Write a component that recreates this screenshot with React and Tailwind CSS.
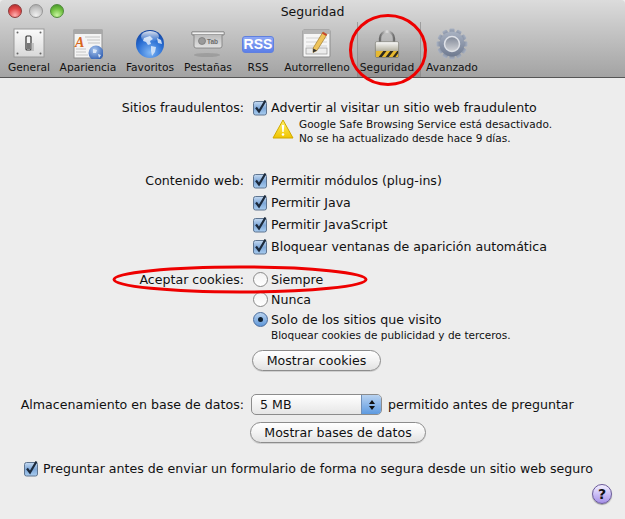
const font = { fontFamily: '"DejaVu Sans", sans-serif' };

function SwitchIcon() {
  return (
    <svg width="32" height="32" viewBox="0 0 32 32">
      <defs>
        <linearGradient id="plate" x1="0" y1="0" x2="0" y2="1">
          <stop offset="0" stopColor="#fbfbfb" />
          <stop offset="1" stopColor="#d8d8d8" />
        </linearGradient>
      </defs>
      <rect x="1" y="1" width="30" height="28" fill="url(#plate)" stroke="#9a9a9a" />
      <circle cx="4.5" cy="4.5" r="1" fill="#666" />
      <circle cx="27.5" cy="4.5" r="1" fill="#666" />
      <circle cx="4.5" cy="25.5" r="1" fill="#666" />
      <circle cx="27.5" cy="25.5" r="1" fill="#666" />
      <rect x="13" y="8" width="5" height="14" rx="1" fill="#f2f2f2" stroke="#333" strokeWidth="1.2" />
      <rect x="14" y="15" width="3" height="6" fill="#777" />
      <rect x="18" y="15" width="3" height="8" fill="#aaa" opacity="0.6" />
    </svg>
  );
}

function AppearanceIcon() {
  return (
    <svg width="30" height="30" viewBox="0 0 30 30">
      <defs>
        <radialGradient id="miniGlobe" cx="0.4" cy="0.3" r="0.8">
          <stop offset="0" stopColor="#a9c7f0" />
          <stop offset="1" stopColor="#1f4fa8" />
        </radialGradient>
      </defs>
      <rect x="1" y="1" width="28" height="28" fill="#f4f4f4" stroke="#8f8f8f" />
      <rect x="1" y="1" width="28" height="4" fill="#a8a8a8" />
      <path d="M12 8h15M14 11h13M15 14h12M3 20h10M3 23h10M3 26h12" stroke="#c4c4c4" strokeWidth="1" />
      <text x="2" y="18" fontSize="14" fontStyle="italic" fontWeight="700" fill="#d9671c" fontFamily="Liberation Serif, serif">A</text>
      <circle cx="23" cy="24" r="7.5" fill="url(#miniGlobe)" />
      <path d="M20 20l4 1-1 3-3 0zM25 25l3 1-2 3z" fill="#dbe7f7" />
    </svg>
  );
}

function GlobeIcon() {
  return (
    <svg width="30" height="30" viewBox="0 0 30 30">
      <defs>
        <radialGradient id="globe" cx="0.5" cy="0.8" r="0.85">
          <stop offset="0" stopColor="#7fb6f5" />
          <stop offset="0.55" stopColor="#2a6fd4" />
          <stop offset="1" stopColor="#0c3a94" />
        </radialGradient>
        <linearGradient id="shine" x1="0" y1="0" x2="0" y2="1">
          <stop offset="0" stopColor="#ffffff" stopOpacity="0.85" />
          <stop offset="1" stopColor="#ffffff" stopOpacity="0" />
        </linearGradient>
      </defs>
      <circle cx="15" cy="15" r="14" fill="url(#globe)" />
      <path d="M9 9l6-2 3 3-3 2 1 3-3 1-2-3-3-1zM16 17l5 1-1 5-3 4-1-5zM22 9l4 2 1 4-4-1z" fill="#d7e6f8" opacity="0.9" />
      <ellipse cx="15" cy="7.5" rx="9" ry="5.5" fill="url(#shine)" />
    </svg>
  );
}

function TabIcon() {
  return (
    <svg width="34" height="30" viewBox="0 0 34 30">
      <defs>
        <linearGradient id="tabBody" x1="0" y1="0" x2="0" y2="1">
          <stop offset="0" stopColor="#b4b4b4" />
          <stop offset="1" stopColor="#e2e2e2" />
        </linearGradient>
      </defs>
      <path d="M1 3h32v3h-2v11q0 2-2 2H5q-2 0-2-2V6H1z" fill="url(#tabBody)" stroke="#7c7c7c" strokeWidth="0.8" />
      <rect x="1" y="3" width="32" height="2.5" fill="#f1f1f1" stroke="#7c7c7c" strokeWidth="0.6" />
      <circle cx="11" cy="12" r="3.5" fill="#9a9a9a" stroke="#747474" strokeWidth="0.7" />
      <text x="16" y="14.5" fontSize="6.5" fontWeight="700" fill="#6c6c6c" fontFamily="Liberation Sans, sans-serif">Tab</text>
      <ellipse cx="16" cy="26" rx="13" ry="2" fill="#8c8c8c" opacity="0.55" />
    </svg>
  );
}

function RssIcon() {
  return (
    <div className="flex h-[17px] w-[32px] items-center justify-center rounded-[3px] border border-[#5f80e0] bg-gradient-to-b from-[#90a9f5] to-[#5c7fe8] text-[14px] font-bold leading-none text-white" style={{ fontFamily: '"Liberation Sans", sans-serif' }}>
      RSS
    </div>
  );
}

function AutofillIcon() {
  return (
    <svg width="30" height="30" viewBox="0 0 30 30">
      <rect x="1" y="1" width="27" height="27" rx="1" fill="#f6f6f6" stroke="#8c8c8c" />
      <rect x="1" y="1" width="27" height="4" fill="#b5b5b5" />
      <path d="M4 9h21M4 13h21M4 17h21" stroke="#d2d2d2" />
      <rect x="4" y="19" width="21" height="6" fill="#ececec" stroke="#999" strokeWidth="0.7" />
      <path d="M21 3l4 2.5-10 16-4 2 .2-4.5z" fill="#eec35a" stroke="#a07a2a" strokeWidth="0.7" />
      <path d="M21 3l4 2.5-1 1.6-4-2.5z" fill="#c8432f" />
      <path d="M11.2 19.5l3.8 2-4 2z" fill="#333" />
    </svg>
  );
}

function LockIcon() {
  return (
    <svg width="26" height="30" viewBox="0 0 28 31">
      <defs>
        <linearGradient id="lockBody" x1="0" y1="0" x2="0" y2="1">
          <stop offset="0" stopColor="#fafafa" />
          <stop offset="0.55" stopColor="#b9b6a6" />
          <stop offset="1" stopColor="#8f8c7c" />
        </linearGradient>
        <linearGradient id="shackle" x1="0" y1="0" x2="1" y2="0">
          <stop offset="0" stopColor="#6a6a6a" />
          <stop offset="0.5" stopColor="#e2e2e2" />
          <stop offset="1" stopColor="#6a6a6a" />
        </linearGradient>
      </defs>
      <path d="M6.5 14V9.5a7.5 7.5 0 0 1 15 0V14" fill="none" stroke="url(#shackle)" strokeWidth="2.6" />
      <rect x="1.5" y="13" width="25" height="17" rx="1.5" fill="url(#lockBody)" stroke="#6c6c62" strokeWidth="0.6" />
      <rect x="2" y="23" width="24" height="6.5" fill="#e7b92f" />
      <path d="M5 29.5l5-6.5h3.5l-5 6.500zM12.500 29.500l5-6.500h3.500l-5 6.500zM20 29.500l5-6.500h1v2.500l-3 4z" fill="#2d2a20" />
    </svg>
  );
}

function GearIcon() {
  const teeth = Array.from({ length: 12 }, (_, i) => i * 30);
  return (
    <svg width="32" height="32" viewBox="0 0 32 32">
      <defs>
        <linearGradient id="gear" x1="0" y1="0" x2="0" y2="1">
          <stop offset="0" stopColor="#a9b2c2" />
          <stop offset="1" stopColor="#6f7a90" />
        </linearGradient>
        <linearGradient id="gearHole" x1="0" y1="0" x2="0" y2="1">
          <stop offset="0" stopColor="#7f8797" />
          <stop offset="1" stopColor="#d2d4d8" />
        </linearGradient>
      </defs>
      {teeth.map((a) => (
        <rect key={a} x="13.500" y="0.500" width="5" height="6" rx="1" fill="url(#gear)" transform={`rotate(${a} 16 16)`} />
      ))}
      <circle cx="16" cy="16" r="12.500" fill="url(#gear)" />
      <circle cx="16" cy="16" r="7.500" fill="url(#gearHole)" stroke="#dfe2e8" strokeWidth="1.500" />
    </svg>
  );
}

function ToolItem({ label, width, selected, ml, children }) {
  return (
    <div className={`relative flex h-[77px] shrink-0 flex-col items-center ${width} ${ml || ""}`}>
      {/* selected tab fades in from the top of the toolbar */}
      {selected && <div className="absolute bottom-0 left-[5px] right-[1px] top-[22px] border-x border-[#8a8a8a]/70 bg-gradient-to-b from-[#000000]/0 to-[#000000]/10" />}
      <div className="relative mt-[29px] flex h-[30px] w-full items-center justify-center">{children}</div>
      <span className="relative mt-[2px] whitespace-nowrap text-[10.700px] leading-[14px] text-[#111]">{label}</span>
    </div>
  );
}

function Checkbox() {
  return (
    <svg width="16" height="17" viewBox="0 0 16 17" className="shrink-0">
      <defs>
        <linearGradient id="check" x1="0" y1="0" x2="0" y2="1">
          <stop offset="0" stopColor="#c6dbf2" />
          <stop offset="0.5" stopColor="#7fa8d8" />
          <stop offset="1" stopColor="#a9cdf0" />
        </linearGradient>
      </defs>
      <rect x="0.500" y="2.500" width="13" height="13.500" rx="2" fill="url(#check)" stroke="#5f7590" />
      <path d="M3 8.500l3 4 6.500-11" fill="none" stroke="#1c2a3c" strokeWidth="2.200" />
    </svg>
  );
}

function Radio({ on }) {
  return (
    <div className={`flex size-[15px] shrink-0 items-center justify-center rounded-full border ${on ? "border-[#4a6c9c] bg-gradient-to-b from-[#b9d3ef] to-[#5f97d8]" : "border-[#8a8a8a] bg-gradient-to-b from-[#f2f2f2] to-[#ffffff]"}`}>
      {on && <div className="size-[5px] rounded-full bg-[#10202f]" />}
    </div>
  );
}

function Pill({ width, children }) {
  return (
    <div className={`flex h-[21px] items-center justify-center rounded-full border border-[#8c8c8c] bg-gradient-to-b from-[#ffffff] via-[#f3f3f3] to-[#e2e2e2] pt-[2px] text-[#111] shadow-[0_1px_0_#cfcfcf] ${width}`}>
      {children}
    </div>
  );
}

function Row({ label, className, children }) {
  return (
    <div className={`flex items-center ${className || ""}`}>
      <div className="w-[244px] shrink-0 whitespace-nowrap pt-[2px] text-right">{label}</div>
      <div className="ml-[9px] flex items-center">{children}</div>
    </div>
  );
}

function Light({ className }) {
  return <div className={`size-[14px] rounded-full border ${className}`} />;
}

export default function App() {
  return (
    <div className="relative h-[519px] w-[625px] overflow-hidden bg-[#ededed] text-[12.600px] leading-none text-[#111]" style={font}>
      {/* Toolbar */}
      <div className="relative flex h-[78px] rounded-t-[4px] border-b border-[#555] bg-gradient-to-b from-[#dcdcdc] to-[#a3a3a3] pl-[5px]">
        <div className="absolute left-[8px] top-[4px] flex gap-[7px]">
          <Light className="border-[#8c3a3a] bg-[radial-gradient(circle_at_50%_85%,#ffb0b0,#e04848_55%,#a82828)]" />
          <Light className="border-[#959595] bg-[radial-gradient(circle_at_50%_85%,#f0f0f0,#c8c8c8_55%,#a0a0a0)]" />
          <Light className="border-[#4f8a3a] bg-[radial-gradient(circle_at_50%_85%,#c8f5a0,#70c040_55%,#3f8a25)]" />
        </div>
        <div className="absolute inset-x-0 top-[4px] text-center text-[12.500px] leading-[15px] text-[#111]">Seguridad</div>
        <ToolItem label="General" width="w-[48px]"><SwitchIcon /></ToolItem>
        <ToolItem label="Apariencia" width="w-[70px]"><AppearanceIcon /></ToolItem>
        <ToolItem label="Favoritos" width="w-[54px]"><GlobeIcon /></ToolItem>
        <ToolItem label="Pestañas" width="w-[62px]"><TabIcon /></ToolItem>
        <ToolItem label="RSS" width="w-[38px]"><RssIcon /></ToolItem>
        <ToolItem label="Autorrelleno" width="w-[70px]" ml="ml-[5px]"><AutofillIcon /></ToolItem>
        <ToolItem label="Seguridad" width="w-[70px]" selected><LockIcon /></ToolItem>
        <ToolItem label="Avanzado" width="w-[60px]"><GearIcon /></ToolItem>
      </div>

      {/* Preferences */}
      <Row label="Sitios fraudulentos:" className="mt-[18px] h-[22px]">
        <Checkbox />
        <span className="ml-[2px] pt-[2px]">Advertir al visitar un sitio web fraudulento</span>
      </Row>
      <div className="-mt-[2px] ml-[272px] flex h-[28px] items-start">
        <svg width="22" height="20" viewBox="0 0 22 20" className="mt-[3px] shrink-0">
          <defs>
            <linearGradient id="warn" x1="0" y1="0" x2="0" y2="1">
              <stop offset="0" stopColor="#fff26a" />
              <stop offset="1" stopColor="#f0c400" />
            </linearGradient>
          </defs>
          <path d="M11 1L21 19H1z" fill="url(#warn)" stroke="#d0a800" strokeLinejoin="round" />
          <path d="M9.800 6h2.400l-.5 7h-1.400z" fill="#fff" />
          <circle cx="11" cy="15.500" r="1.300" fill="#fff" />
        </svg>
        <div className="ml-[5px] mt-[1px] text-[10.500px] leading-[14px]">
          <div>Google Safe Browsing Service está desactivado.</div>
          <div>No se ha actualizado desde hace 9 días.</div>
        </div>
      </div>

      <Row label="Contenido web:" className="mt-[25px] h-[22px]">
        <Checkbox />
        <span className="ml-[2px] pt-[2px]">Permitir módulos (plug-ins)</span>
      </Row>
      <Row className="h-[22px]">
        <Checkbox />
        <span className="ml-[2px] pt-[2px]">Permitir Java</span>
      </Row>
      <Row className="h-[22px]">
        <Checkbox />
        <span className="ml-[2px] pt-[2px]">Permitir JavaScript</span>
      </Row>
      <Row className="h-[22px]">
        <Checkbox />
        <span className="ml-[2px] pt-[2px]">Bloquear ventanas de aparición automática</span>
      </Row>

      <Row label="Aceptar cookies:" className="mt-[12px] h-[20px]">
        <Radio />
        <span className="ml-[3px] pt-[2px]">Siempre</span>
      </Row>
      <Row className="h-[20px]">
        <Radio />
        <span className="ml-[3px] pt-[2px]">Nunca</span>
      </Row>
      <Row className="h-[20px]">
        <Radio on />
        <span className="ml-[3px] pt-[2px]">Solo de los sitios que visito</span>
      </Row>
      <div className="-mt-[1px] ml-[271px] pt-[1px] text-[10.500px] leading-[13px]">Bloquear cookies de publicidad y de terceros.</div>

      <div className="ml-[252px] mt-[8px]">
        <Pill width="w-[129px]">Mostrar cookies</Pill>
      </div>

      <Row label="Almacenamiento en base de datos:" className="mt-[23px] h-[21px]">
        <div className="-ml-[2px] flex h-[21px] w-[131px] overflow-hidden rounded-[5px] border border-[#8c8c8c] bg-gradient-to-b from-[#ffffff] to-[#e6e6e6]">
          <span className="flex flex-1 items-center pl-[8px] pt-[2px]">5 MB</span>
          <div className="flex w-[20px] flex-col items-center justify-center gap-[2px] border-l border-[#6f8fb8] bg-gradient-to-b from-[#b8d2f0] to-[#5d9ae0]">
            <div className="size-0 border-x-[3px] border-b-[4px] border-x-transparent border-b-[#111]" />
            <div className="size-0 border-x-[3px] border-t-[4px] border-x-transparent border-t-[#111]" />
          </div>
        </div>
        <span className="ml-[6px] pt-[2px]">permitido antes de preguntar</span>
      </Row>
      <div className="ml-[250px] mt-[7px]">
        <Pill width="w-[176px]">Mostrar bases de datos</Pill>
      </div>

      <div className="ml-[24px] mt-[15px] flex h-[20px] items-center">
        <Checkbox />
        <span className="ml-[3px] pt-[2px]">Preguntar antes de enviar un formulario de forma no segura desde un sitio web seguro</span>
      </div>

      <div className="mt-[6px] flex justify-end pr-[13px]">
        <div className="flex size-[20px] items-center justify-center rounded-full border border-[#6a5a9a] bg-gradient-to-b from-[#f4f0ff] to-[#a690e8] text-[14px] font-bold text-[#111] shadow-[0_1px_1px_#999]">?</div>
      </div>

      {/* Red annotations drawn over the screenshot */}
      <svg className="pointer-events-none absolute left-0 top-0" width="625" height="519">
        <ellipse cx="388" cy="50" rx="37.500" ry="34.500" fill="none" stroke="#ee0000" strokeWidth="3" />
        <ellipse cx="240" cy="279.500" rx="126" ry="12.500" fill="none" stroke="#ee0000" strokeWidth="3" />
      </svg>
    </div>
  );
}
